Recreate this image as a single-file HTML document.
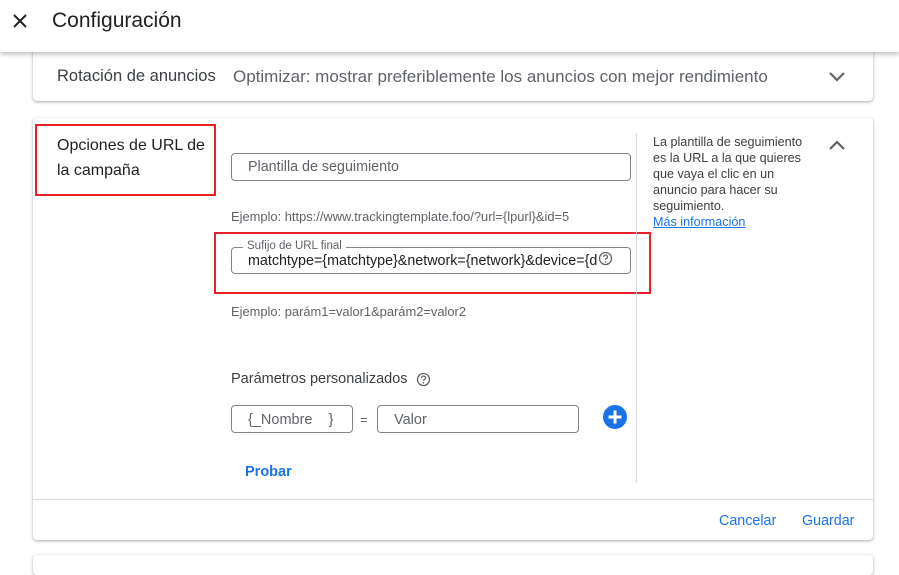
<!DOCTYPE html>
<html><head><meta charset="utf-8"><style>
*{box-sizing:border-box;margin:0;padding:0}
body{width:899px;height:559px;overflow:hidden;background:#fff;font-family:"Liberation Sans",Roboto,sans-serif;position:relative;color:#202124}
.a{position:absolute}
.hdr{left:0;top:0;width:899px;height:52px;background:#fff;box-shadow:0 2px 5px rgba(0,0,0,.28);z-index:5}
.card{background:#fff;border-radius:4px;box-shadow:0 1px 2px rgba(60,64,67,.3),0 1px 3px 1px rgba(60,64,67,.12)}
.inp{border:1px solid #80868b;border-radius:4px;background:#fff}
.g{color:#5f6368}
.red{border:2px solid #e8202a}
.blue{color:#1a73e8}
</style></head><body>
<div class="a hdr">
  <svg class="a" style="left:12px;top:13px" width="16" height="16" viewBox="0 0 16 16"><path d="M2 2L14 14M14 2L2 14" stroke="#202124" stroke-width="2"/></svg>
  <div class="a" style="left:52px;top:9px;font-size:21px;color:#202124">Configuración</div>
</div>
<div class="a card" style="left:33px;top:50px;width:840px;height:51px"></div>
<div class="a" style="left:57px;top:67px;font-size:16.5px;color:#3c4043">Rotación de anuncios</div>
<div class="a g" style="left:233px;top:67px;font-size:17px">Optimizar: mostrar preferiblemente los anuncios con mejor rendimiento</div>
<svg class="a" style="left:828px;top:71px" width="18" height="12" viewBox="0 0 18 12"><path d="M2 2L9 9L16 2" stroke="#5f6368" stroke-width="2.2" fill="none"/></svg>

<div class="a card" style="left:33px;top:118px;width:840px;height:422px"></div>
<div class="a red" style="left:35px;top:124px;width:181px;height:72px"></div>
<div class="a" style="left:57px;top:133px;font-size:16px;line-height:25px;color:#202124;width:155px">Opciones de URL de la campaña</div>

<div class="a inp" style="left:231px;top:153px;width:400px;height:28px"></div>
<div class="a g" style="left:248px;top:159px;font-size:14.3px">Plantilla de seguimiento</div>
<div class="a g" style="left:231px;top:209px;font-size:12.9px">Ejemplo: https://www.trackingtemplate.foo/?url={lpurl}&amp;id=5</div>

<div class="a red" style="left:214px;top:232px;width:437px;height:62px"></div>
<div class="a inp" style="left:231px;top:247px;width:400px;height:27px"></div>
<div class="a g" style="left:243px;top:240px;font-size:11.5px;background:#fff;padding:0 4px">Sufijo de URL final</div>
<div class="a" style="left:248px;top:253px;font-size:14.3px;color:#202124;width:350px;overflow:hidden;white-space:nowrap">matchtype={matchtype}&amp;network={network}&amp;device={device}</div>
<svg class="a" style="left:598px;top:251px" width="15" height="15" viewBox="0 0 15 15"><circle cx="7.5" cy="7.5" r="6" stroke="#5f6368" stroke-width="1.3" fill="#fff"/><path d="M5.6 6a1.9 1.9 0 1 1 2.6 1.7c-.5.3-.7.6-.7 1.2" stroke="#5f6368" stroke-width="1.2" fill="none"/><circle cx="7.5" cy="10.8" r=".8" fill="#5f6368"/></svg>
<div class="a g" style="left:231px;top:304px;font-size:12.9px">Ejemplo: parám1=valor1&amp;parám2=valor2</div>

<div class="a" style="left:231px;top:371px;font-size:14.5px;color:#3c4043">Parámetros personalizados</div>
<svg class="a" style="left:416px;top:372px" width="15" height="15" viewBox="0 0 15 15"><circle cx="7.5" cy="7.5" r="6" stroke="#5f6368" stroke-width="1.3" fill="none"/><path d="M5.6 6a1.9 1.9 0 1 1 2.6 1.7c-.5.3-.7.6-.7 1.2" stroke="#5f6368" stroke-width="1.2" fill="none"/><circle cx="7.5" cy="10.8" r=".8" fill="#5f6368"/></svg>
<div class="a inp" style="left:231px;top:405px;width:122px;height:28px"></div>
<div class="a g" style="left:248px;top:412px;font-size:14.5px;white-space:pre">{_Nombre    }</div>
<div class="a g" style="left:360px;top:412px;font-size:13px">=</div>
<div class="a inp" style="left:377px;top:405px;width:202px;height:28px"></div>
<div class="a g" style="left:394px;top:412px;font-size:14.5px">Valor</div>
<svg class="a" style="left:603px;top:405px" width="24" height="24" viewBox="0 0 24 24"><circle cx="12" cy="12" r="12" fill="#1a73e8"/><path d="M12 5.5V18.5M5.5 12H18.5" stroke="#fff" stroke-width="3"/></svg>
<div class="a blue" style="left:245px;top:464px;font-size:14.5px;font-weight:bold">Probar</div>

<div class="a" style="left:636px;top:133px;width:1px;height:350px;background:#dadce0"></div>
<div class="a" style="left:653px;top:134px;font-size:12.6px;line-height:16px;color:#3c4043;width:158px">La plantilla de seguimiento es la URL a la que quieres que vaya el clic en un anuncio para hacer su seguimiento.<br><span class="blue" style="text-decoration:underline">Más información</span></div>
<svg class="a" style="left:828px;top:139px" width="18" height="12" viewBox="0 0 18 12"><path d="M2 10L9 3L16 10" stroke="#5f6368" stroke-width="2.2" fill="none"/></svg>

<div class="a" style="left:33px;top:499px;width:840px;height:1px;background:#dadce0"></div>
<div class="a blue" style="left:719px;top:513px;font-size:14.3px">Cancelar</div>
<div class="a blue" style="left:802px;top:513px;font-size:14.3px">Guardar</div>
<div class="a card" style="left:33px;top:555px;width:840px;height:20px"></div>
</body></html>
